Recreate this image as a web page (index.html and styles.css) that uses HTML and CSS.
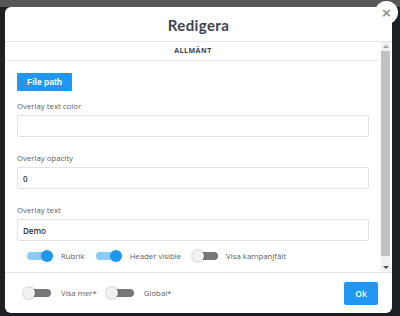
FILE: index.html
```html
<!DOCTYPE html>
<html lang="sv">
<head>
    <meta charset="UTF-8">
    <meta name="viewport" content="width=device-width, initial-scale=1.0">
    <title>Redigera</title>
    <link rel="stylesheet" href="styles.css">
</head>
<body>
    <div class="topBand"></div>
    <div class="modal">
        <button class="closeButton">&times;</button>
        <div class="modalHeader">Redigera</div>
        <div class="modalBody">
            <div class="scrollContent">
                <div class="tabTitle">ALLMÄNT</div>
                <div class="content">
                    <button class="fileButton">File path</button>
                    <label class="fieldLabel first">Overlay text color</label>
                    <input class="fieldInput" type="text" value="">
                    <label class="fieldLabel">Overlay opacity</label>
                    <input class="fieldInput" type="text" value="0">
                    <label class="fieldLabel">Overlay text</label>
                    <input class="fieldInput" type="text" value="Demo">
                    <div class="toggleRow">
                        <div class="toggleItem">
                            <span class="switch on"><span class="knob"></span></span>
                            <span class="toggleText">Rubrik</span>
                        </div>
                        <div class="toggleItem">
                            <span class="switch on"><span class="knob"></span></span>
                            <span class="toggleText">Header visible</span>
                        </div>
                        <div class="toggleItem">
                            <span class="switch"><span class="knob"></span></span>
                            <span class="toggleText">Visa kampanjfält</span>
                        </div>
                    </div>
                </div>
            </div>
            <div class="scrollBar">
                <div class="arrowUp"></div>
                <div class="track"><div class="thumb"></div></div>
                <div class="arrowDown"></div>
            </div>
        </div>
        <div class="modalFooter">
            <div class="footerToggles">
                <div class="toggleItem">
                    <span class="switch big"><span class="knob"></span></span>
                    <span class="toggleText">Visa mer*</span>
                </div>
                <div class="toggleItem">
                    <span class="switch big"><span class="knob"></span></span>
                    <span class="toggleText">Global*</span>
                </div>
            </div>
            <button class="okButton">Ok</button>
        </div>
    </div>
</body>
</html>
```

FILE: styles.css
```css
html,body{
    margin: 0px;
    padding: 0px;
    width: 100%;
    height: 100%;
}
body{
    background-color: #1d2124;
    font-family: "Open Sans", "Liberation Sans", sans-serif;
    overflow: hidden;
}
.topBand{
    height: 7px;
    background-color: #575757;
}
.modal{
    position: relative;
    margin-left: 5px;
    width: 387px;
    height: 306px;
    background-color: #ffffff;
    border-radius: 6px;
    display: flex;
    flex-direction: column;
}
.closeButton{
    position: absolute;
    top: -6px;
    right: -6px;
    width: 23px;
    height: 23px;
    border: none;
    border-radius: 50%;
    background-color: #ffffff;
    color: #8a8a8a;
    font-family: "DejaVu Sans", sans-serif;
    font-size: 13px;
    font-weight: bold;
    line-height: 23px;
    padding: 0px;
    text-align: center;
}
.modalHeader{
    height: 34px;
    line-height: 36px;
    text-align: center;
    font-family: "Lato", "Open Sans", sans-serif;
    font-size: 15px;
    font-weight: bold;
    letter-spacing: 0.4px;
    color: #3b4352;
    border-bottom: 1px solid #e6e6e6;
}
.modalBody{
    flex: 1;
    min-height: 0px;
    display: flex;
    flex-direction: row;
    padding-right: 2px;
}
.scrollContent{
    flex: 1;
    overflow: hidden;
}
.scrollBar{
    width: 9px;
    display: flex;
    flex-direction: column;
    background-color: #f1f1f1;
}
.arrowUp,.arrowDown{
    height: 9px;
    display: flex;
    justify-content: center;
    align-items: center;
}
.arrowUp::after{
    content: "";
    border-left: 3px solid transparent;
    border-right: 3px solid transparent;
    border-bottom: 3px solid #a3a3a3;
}
.arrowDown::after{
    content: "";
    border-left: 3px solid transparent;
    border-right: 3px solid transparent;
    border-top: 3px solid #505050;
}
.track{
    flex: 1;
    padding-bottom: 7px;
    display: flex;
    flex-direction: column;
}
.thumb{
    flex: 1;
    background-color: #c1c1c1;
}
.tabTitle{
    height: 18px;
    line-height: 18px;
    text-align: center;
    font-size: 7px;
    font-weight: bold;
    letter-spacing: 0.5px;
    color: #3b4352;
    border-bottom: 1px solid #ececec;
}
.content{
    padding: 12px 12px 0px 12px;
    display: flex;
    flex-direction: column;
}
.fileButton{
    align-self: flex-start;
    width: 55px;
    height: 18px;
    border: none;
    border-radius: 1px;
    background-color: #2196f3;
    color: #ffffff;
    font-family: "Liberation Sans", sans-serif;
    font-size: 8.5px;
    font-weight: bold;
    padding: 0px;
}
.fieldLabel{
    height: 10px;
    line-height: 10px;
    font-size: 7.8px;
    color: #5e5e5e;
}
.fieldLabel.first{
    margin-top: 10px;
}
.fieldInput{
    margin-top: 4px;
    margin-bottom: 16px;
    height: 22px;
    box-sizing: border-box;
    border: 1px solid #e3e3e3;
    border-radius: 2px;
    padding: 0px 5px;
    font-family: "Open Sans", sans-serif;
    font-size: 8px;
    font-weight: 600;
    color: #333333;
    outline: none;
}
.toggleRow{
    margin-top: -8px;
    padding-left: 10px;
    display: flex;
    flex-direction: row;
    align-items: center;
    height: 14px;
}
.toggleItem{
    display: flex;
    flex-direction: row;
    align-items: center;
    margin-right: 11px;
}
.toggleText{
    font-size: 7.8px;
    color: #5e5e5e;
}
.switch{
    position: relative;
    width: 26px;
    height: 12px;
    margin-right: 8px;
}
.switch::before{
    content: "";
    position: absolute;
    left: 2px;
    right: 0px;
    top: 2px;
    height: 8px;
    border-radius: 4px;
    background-color: #777777;
}
.switch .knob{
    position: absolute;
    left: 0px;
    top: 0px;
    width: 12px;
    height: 12px;
    border-radius: 50%;
    background-color: #f1f1f1;
    box-shadow: 0px 0px 2px rgba(0, 0, 0, 0.45);
}
.switch.on::before{
    background-color: #8ccbf7;
    left: 0px;
    right: 2px;
}
.switch.on .knob{
    left: 14px;
    background-color: #1e96f0;
    box-shadow: none;
}
.switch.big{
    width: 28px;
    margin-right: 10px;
}
.modalFooter{
    height: 40px;
    border-top: 1px solid #e6e6e6;
    display: flex;
    flex-direction: row;
    align-items: center;
    justify-content: space-between;
    padding-left: 18px;
    padding-right: 14px;
}
.footerToggles{
    display: flex;
    flex-direction: row;
    align-items: center;
}
.footerToggles .toggleItem{
    margin-right: 9px;
}
.okButton{
    width: 34px;
    height: 23px;
    border: none;
    border-radius: 2px;
    background-color: #2196f3;
    color: #ffffff;
    font-family: "Open Sans", sans-serif;
    font-size: 8.5px;
    font-weight: 600;
    padding: 0px;
}
```
